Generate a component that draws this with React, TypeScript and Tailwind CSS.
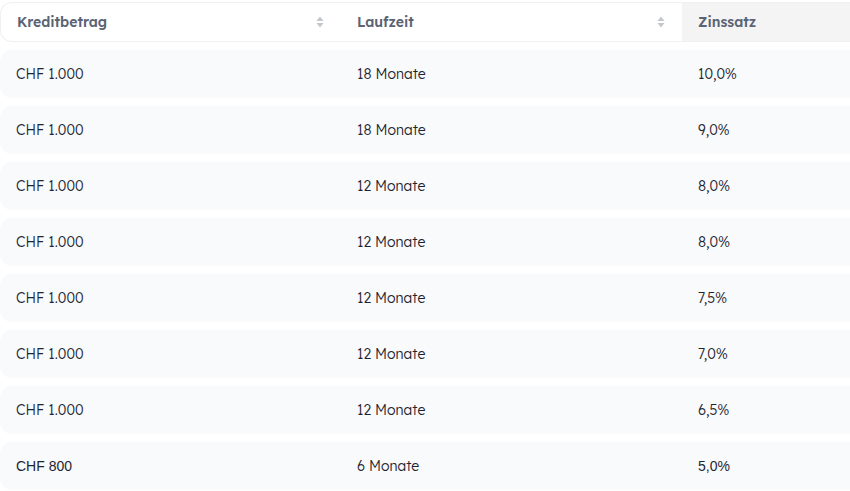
import React from "react";

const rows = [
  { amount: "CHF 1.000", term: "18 Monate", rate: "10,0%" },
  { amount: "CHF 1.000", term: "18 Monate", rate: "9,0%" },
  { amount: "CHF 1.000", term: "12 Monate", rate: "8,0%" },
  { amount: "CHF 1.000", term: "12 Monate", rate: "8,0%" },
  { amount: "CHF 1.000", term: "12 Monate", rate: "7,5%" },
  { amount: "CHF 1.000", term: "12 Monate", rate: "7,0%" },
  { amount: "CHF 1.000", term: "12 Monate", rate: "6,5%" },
  { amount: "CHF 800", term: "6 Monate", rate: "5,0%", plain: true },
];

function SortIcon() {
  return (
    <svg width="8" height="12" viewBox="0 0 8 12" className="text-[#c3c7ce]">
      <path d="M4 0.5 L7.5 5 L0.5 5 Z" fill="currentColor" />
      <path d="M4 11.5 L7.5 7 L0.5 7 Z" fill="currentColor" />
    </svg>
  );
}

function HeaderCell({ label, sortable, active, first }: { label: string; sortable?: boolean; active?: boolean; first?: boolean }) {
  return (
    <div
      className={`flex h-full shrink-0 items-center justify-between pr-[17px] ${first ? "w-[340px] pl-[16px]" : "w-[341px] pl-[16px]"} ${active ? "bg-[#f4f4f5]" : ""}`}
    >
      <span className="text-[14px] font-semibold text-[#5b6475]">{label}</span>
      {sortable && <SortIcon />}
    </div>
  );
}

export default function App() {
  return (
    <div className="h-[491px] w-[850px] overflow-hidden bg-white font-['Lexend','Inter','Noto_Sans',sans-serif]">
      <div className="w-[1100px] pt-[2px]">
        <div className="flex h-[40px] overflow-hidden rounded-l-[12px] border border-r-0 border-[#eef0f2] bg-white">
          <HeaderCell label="Kreditbetrag" sortable first />
          <HeaderCell label="Laufzeit" sortable />
          <HeaderCell label="Zinssatz" active />
        </div>
        <div className="mt-[8px] flex flex-col gap-[8px]">
          {rows.map((r, i) => (
            <div key={i} className="flex h-[48px] items-center rounded-l-[12px] bg-[#f8fafb] text-[14px] font-light text-[#1f2530]">
              <div className={`w-[341px] shrink-0 pl-[16px] ${r.plain ? "font-['Liberation_Sans',sans-serif] font-normal" : ""}`}>{r.amount}</div>
              <div className="w-[341px] shrink-0 pl-[16px]">{r.term}</div>
              <div className={`w-[341px] shrink-0 pl-[16px] ${r.plain ? "font-['Liberation_Sans',sans-serif] font-normal" : ""}`}>{r.rate}</div>
            </div>
          ))}
        </div>
      </div>
    </div>
  );
}
